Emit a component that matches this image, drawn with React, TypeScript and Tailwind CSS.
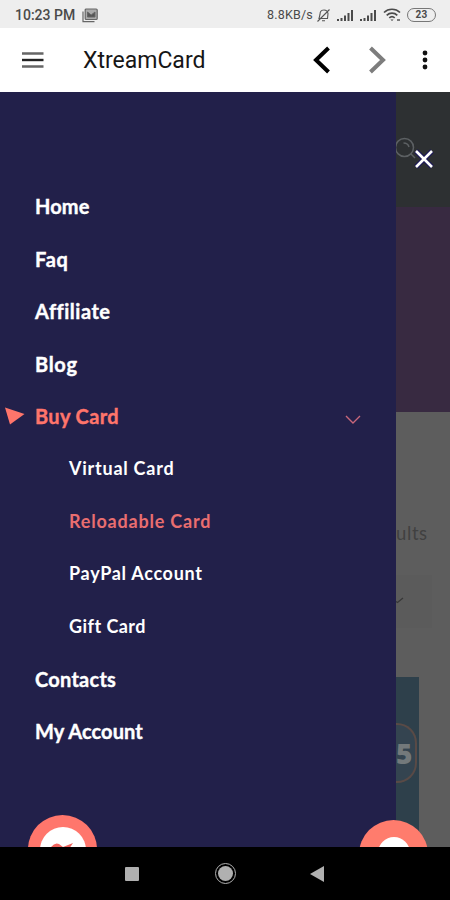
import clsx from "clsx";

type MenuItem = {
  label: string;
  spacing: string;
  active?: boolean;
  children?: MenuItem[];
};

const menu: MenuItem[] = [
  { label: "Home", spacing: "tracking-[0.1px]" },
  { label: "Faq", spacing: "tracking-[0.7px]" },
  { label: "Affiliate", spacing: "tracking-[0.5px]" },
  { label: "Blog", spacing: "tracking-[0.7px]" },
  {
    label: "Buy Card",
    spacing: "tracking-[0.35px]",
    active: true,
    children: [
      { label: "Virtual Card", spacing: "tracking-[0.75px]" },
      { label: "Reloadable Card", spacing: "tracking-[0.8px]", active: true },
      { label: "PayPal Account", spacing: "tracking-[0.7px]" },
      { label: "Gift Card", spacing: "tracking-[0.45px]" },
    ],
  },
  { label: "Contacts", spacing: "tracking-[0.25px]" },
  { label: "My Account", spacing: "tracking-[0.1px]" },
];

function Signal({ className }: { className?: string }) {
  return (
    <svg className={clsx("h-3 w-[17px]", className)} viewBox="0 0 17 12" fill="#4a4a4a">
      <path d="M0 10h2v2H0zM3.5 9h2v3h-2zM7 6.5h2V12H7zM10.5 4h2v8h-2zM14 1h2v11h-2z" />
    </svg>
  );
}

function StatusBar() {
  return (
    <div className="flex h-7 shrink-0 items-center bg-[#eeeeee] pl-[15px] pr-[14px] pt-[2px] font-[Roboto,sans-serif] text-[#4a4a4a]">
      <span className="whitespace-nowrap text-[14px] font-medium">10:23 PM</span>
      <svg className="ml-[7px] h-[15px] w-4" viewBox="0 0 16 15" fill="none" stroke="#666">
        <path d="M1 3.5v10.2h11.5" strokeWidth="1.2" />
        <rect x="3.2" y="1" width="12" height="10.5" rx="1" fill="#aaa" strokeWidth="1.2" />
        <path d="M5.5 9V4l3.7 3L13 4v5z" fill="#555" />
      </svg>
      <span className="ml-auto whitespace-nowrap text-[12.5px] tracking-[0.2px]">8.8KB/s</span>
      <svg className="ml-[3px] h-[15px] w-[15px]" viewBox="0 0 15 15" fill="none" stroke="#555" strokeWidth="1.1">
        <path d="M3 10.5h8.5L12 5.5A4.3 4.3 0 0 0 7.5 2C5 2 4 4 4 6.5zM6 12.8h3M1.5 13.5L13.5 1.5" />
      </svg>
      <Signal className="ml-[6px]" />
      <Signal className="ml-[6px]" />
      <svg className="ml-[6px] h-[14px] w-[18px]" viewBox="0 0 18 14" fill="none" stroke="#4a4a4a" strokeWidth="1.7">
        <path d="M1 4.5a11.5 11.5 0 0 1 16 0M3.7 7.3a7.6 7.6 0 0 1 10.6 0M6.3 9.8a4 4 0 0 1 5.4 0" />
        <path d="M7.4 11.4h3.2L9 13z" fill="#4a4a4a" stroke="none" />
        <path d="M14 12h3" strokeWidth="1.4" />
      </svg>
      <span className="ml-[6px] flex h-[14px] w-[29px] items-center justify-center rounded-full border border-[#777] text-[10px] font-bold leading-none tracking-[0.3px]">
        23
      </span>
    </div>
  );
}

function Toolbar() {
  return (
    <header className="flex h-16 shrink-0 items-center bg-white px-[22px]">
      <svg className="h-4 w-[22px]" viewBox="0 0 22 16">
        <path d="M0 1.500h21.500M0 14.500h21.500" stroke="#666" strokeWidth="2.600" />
        <path d="M0 8h21.500" stroke="#222" strokeWidth="2.400" />
      </svg>
      <h1 className="ml-[39px] mt-[3px] whitespace-nowrap font-[Roboto,sans-serif] text-[23px] text-[#161616]">
        XtreamCard
      </h1>
      <svg className="ml-auto h-7 w-[18px]" viewBox="0 0 18 28" fill="none" stroke="#000" strokeWidth="4">
        <path d="M15.500 2L3 14l12.500 12" />
      </svg>
      <svg className="ml-[37px] h-7 w-[18px]" viewBox="0 0 18 28" fill="none" stroke="#7d7d7d" strokeWidth="4">
        <path d="M2.500 2L15 14 2.500 26" />
      </svg>
      <svg className="ml-[36px] h-5 w-[6px]" viewBox="0 0 6 20" fill="#111">
        <circle cx="3" cy="3" r="2.400" />
        <circle cx="3" cy="10" r="2.400" />
        <circle cx="3" cy="17" r="2.400" />
      </svg>
    </header>
  );
}

function MenuRow({ item, nested }: { item: MenuItem; nested?: boolean }) {
  return (
    <li>
      <a
        href="#"
        className={clsx(
          "relative flex h-[52.5px] items-center whitespace-nowrap",
          nested ? "pl-[69px] text-[18px]" : "pl-[35px] text-[20px] [-webkit-text-stroke:0.4px]",
          item.active ? (nested ? "text-[#e96e70]" : "text-[#ff756b]") : "text-white",
        )}
      >
        {item.children && (
          <svg className="absolute left-[5px] top-[17px] h-[18px] w-5" viewBox="0 0 20 18" fill="currentColor">
            <path d="M0 .5L19.500 7 5 17.500z" />
          </svg>
        )}
        <span className={item.spacing}>{item.label}</span>
        {item.children && (
          <svg
            className="ml-auto mr-[35px] mt-[7px] h-[9px] w-4"
            viewBox="0 0 16 9"
            fill="none"
            stroke="#c9677b"
            strokeWidth="1.400"
          >
            <path d="M1 1l7 7 7-7" />
          </svg>
        )}
      </a>
      {item.children && (
        <ul>
          {item.children.map((child) => (
            <MenuRow key={child.label} item={child} nested />
          ))}
        </ul>
      )}
    </li>
  );
}

// Dimmed shop page that stays visible to the right of the drawer
function ShopPage() {
  return (
    <div className="flex h-full flex-col bg-[#5d5d5d] pl-[396px]">
      <div className="h-[115px] shrink-0 bg-[#2d3032] pt-[45px]">
        <svg className="h-6 w-[22px]" viewBox="0 0 22 24" fill="none" stroke="#5c6063" strokeWidth="1.500">
          <circle cx="8.500" cy="10.500" r="9" />
          <path d="M7.500 6q4.500 0 5.500 4M15 17l4 4" />
        </svg>
      </div>
      <div className="h-[205px] shrink-0 bg-[#382a41]" />
      <div className="mt-[109px] h-6 whitespace-nowrap font-[Lato,sans-serif] text-[18.5px] leading-6 tracking-[0.6px] text-[#414141]">
        ults
      </div>
      <div className="mt-[30px] mr-[18px] h-[53px] bg-[#5b5b5b] pt-[22px]">
        <svg className="h-[7px] w-2" viewBox="0 0 8 7" fill="none" stroke="#383838" strokeWidth="1.300">
          <path d="M0 4.500l1.500 1L7 1" />
        </svg>
      </div>
      <div className="mt-[49px] w-[22.5px] flex-1 bg-[#2e404b] pt-[46px]">
        <div className="flex h-[60px] w-[21px] items-center rounded-r-[20px] border-2 border-l-0 border-[#594a46] bg-[#344450] font-['Open_Sans',sans-serif] text-[28px] font-extrabold leading-none text-[#73797b]">
          5
        </div>
      </div>
    </div>
  );
}

export default function App() {
  return (
    <div className="flex h-[900px] w-[450px] flex-col overflow-hidden bg-black">
      <StatusBar />
      <Toolbar />

      <main className="relative h-[755px] shrink-0 overflow-hidden">
        <ShopPage />

        <nav className="absolute inset-y-0 left-0 w-[396px] bg-[#22204a] pt-[88px] font-[Lato,sans-serif] font-bold">
          <ul>
            {menu.map((item) => (
              <MenuRow key={item.label} item={item} />
            ))}
          </ul>
        </nav>

        <button className="absolute left-[414px] top-[57px]" aria-label="Close menu">
          <svg className="h-5 w-5" viewBox="0 0 20 20" fill="none">
            <path d="M2 2l16 16M18 2L2 18" stroke="#1b1758" strokeWidth="5" />
            <path d="M2 2l16 16M18 2L2 18" stroke="#fff" strokeWidth="2.600" />
          </svg>
        </button>

        <div className="absolute left-[28px] top-[723px] flex size-[69px] items-center justify-center rounded-full bg-[#ff766c]">
          <div className="flex size-[46px] justify-center rounded-full bg-white pt-4">
            <svg className="h-4 w-6" viewBox="0 0 24 16" fill="#f0645e">
              <path d="M0 4Q4-1 8 1l4 3 10-4L14 12 8 7z" />
            </svg>
          </div>
        </div>
        <div className="absolute left-[359px] top-[728px] flex size-[69px] justify-center rounded-full bg-[#ff7c6d] pt-[17px]">
          <div className="size-[32px] rounded-full bg-white" />
        </div>
      </main>

      <footer className="flex h-[53px] shrink-0 items-center bg-black pl-[125px]">
        <div className="size-[14px] rounded-[1px] bg-[#b0b0b0]" />
        <div className="ml-[76px] flex size-[21px] items-center justify-center rounded-full border-[1.5px] border-[#b0b0b0]">
          <div className="size-[15px] rounded-full bg-[#b0b0b0]" />
        </div>
        <svg className="ml-[74px] h-4 w-[14px]" viewBox="0 0 14 16" fill="#b0b0b0">
          <path d="M0 8L14 0v16z" />
        </svg>
      </footer>
    </div>
  );
}
